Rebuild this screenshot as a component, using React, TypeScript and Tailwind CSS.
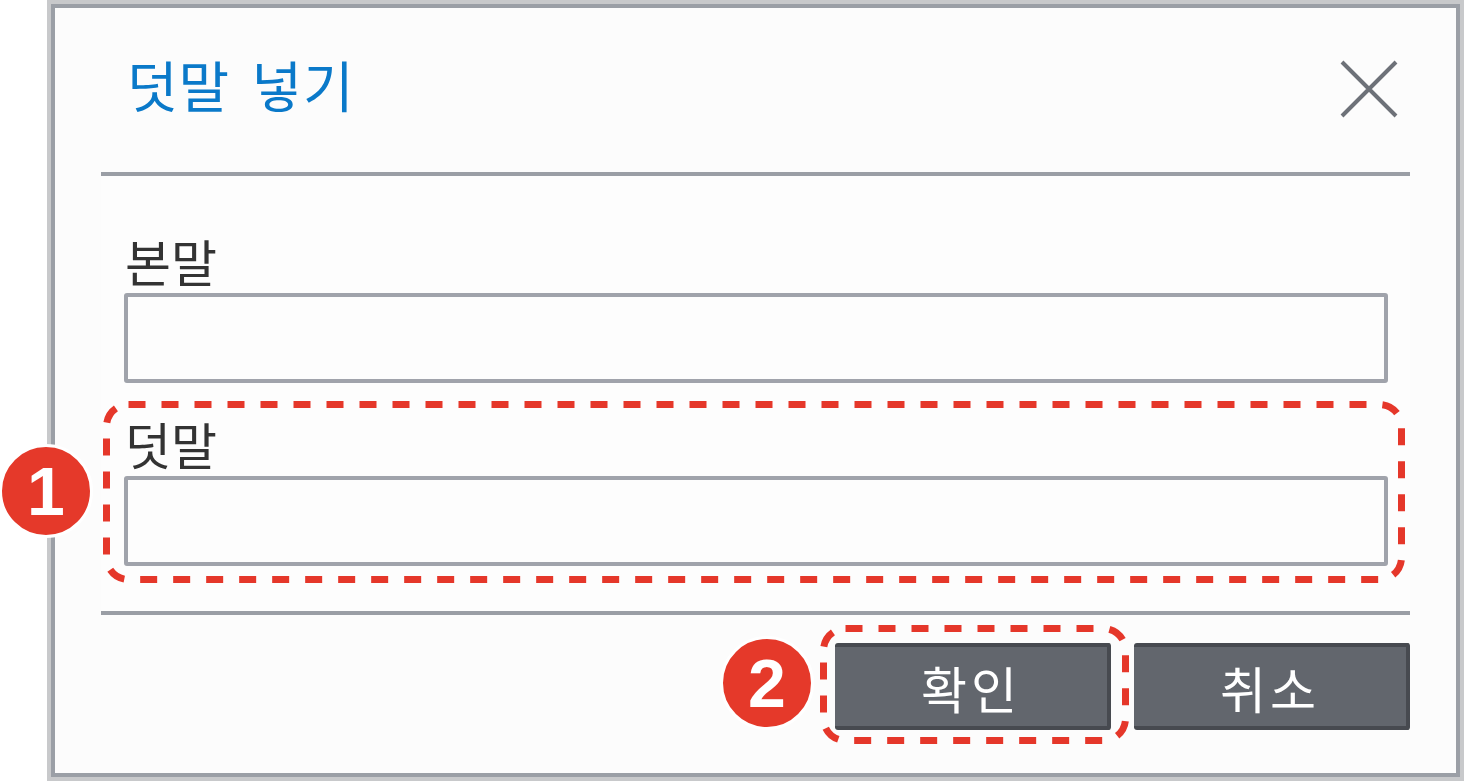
const KR = "font-['Noto_Sans_CJK_KR','Noto_Sans',sans-serif]";

const Field = ({ label }: { label: string }) => (
  <div className="flex flex-col">
    <div className={`${KR} text-[50px] leading-none text-[#333333] pl-[1px]`}>{label}</div>
    <div className="mt-[8px] h-[90px] rounded-[3px] border-4 border-[#a0a3ab] bg-[#fdfdfd]" />
  </div>
);

const Badge = ({ n, className }: { n: number; className: string }) => (
  <div
    className={`absolute flex h-[94px] w-[94px] items-center justify-center rounded-full border-[3px] border-white bg-[#e5392a] font-['Liberation_Sans',Arial,sans-serif] text-[68px] font-bold leading-none text-white ${className}`}
  >
    {n}
  </div>
);

// dashed callout frame drawn over the dialog
const Callout = ({ w, h, r, className }: { w: number; h: number; r: number; className: string }) => (
  <svg width={w} height={h} className={`absolute ${className}`}>
    <rect
      x="3.5"
      y="3.5"
      width={w - 7}
      height={h - 7}
      rx={r}
      fill="none"
      stroke="#e5372a"
      strokeWidth="7"
      strokeDasharray="17 16"
    />
  </svg>
);

export default function App() {
  return (
    <div className="relative h-[781px] w-[1464px] overflow-hidden bg-white">
      <div className="ml-[47px] h-[781px] w-[1417px] border-4 border-[#c8c9cb]">
        <div className="flex h-full flex-col border-4 border-[#9b9fa6] bg-[#fcfcfc]">
          <div className="mx-[46px] flex h-[164px] items-start justify-between">
            <h1
              className={`${KR} ml-[26px] mt-[48px] text-[55px] font-normal leading-none tracking-[1px] text-[#0a79c9] [word-spacing:8px]`}
            >
              덧말 넣기
            </h1>
            <svg width="58" height="58" viewBox="0 0 58 58" className="mr-[12px] mt-[52px]">
              <path d="M2 2L56 56M56 2L2 56" stroke="#6d7178" strokeWidth="4" />
            </svg>
          </div>
          <div className="mx-[46px] h-[4px] bg-[#9a9ea5]" />

          <div className="mx-[46px] flex flex-col gap-[35px] bg-[#fdfdfd] pb-[45px] pl-[23px] pr-[22px] pt-[59px]">
            <Field label="본말" />
            <Field label="덧말" />
          </div>
          <div className="mx-[46px] h-[4px] bg-[#9a9ea5]" />

          <div className="mx-[46px] flex justify-end gap-[23px] pt-[28px]">
            {["확인", "취소"].map((t) => (
              <button
                key={t}
                className={`${KR} flex h-[87px] w-[276px] items-center justify-center rounded-[3px] border-y-4 border-r-4 border-[#474a50] bg-[#62666d] text-[50px] leading-none tracking-[4px] text-white`}
              >
                {t}
              </button>
            ))}
          </div>
        </div>
      </div>

      <Callout w={1302} h={182} r={22} className="left-[103px] top-[401px]" />
      <Callout w={309} h={119} r={22} className="left-[820px] top-[625px]" />

      <Badge n={1} className="left-[-1px] top-[444px]" />
      <Badge n={2} className="left-[720px] top-[636px]" />
    </div>
  );
}
